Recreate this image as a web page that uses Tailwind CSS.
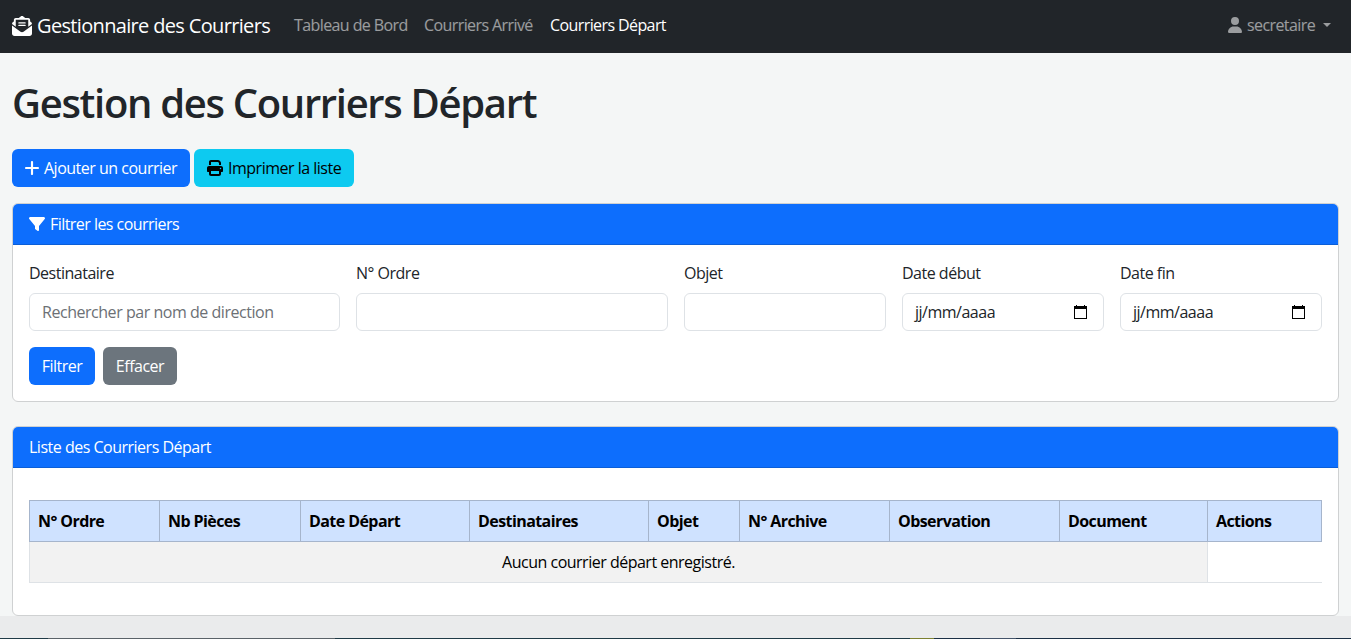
<!DOCTYPE html>
<html lang="fr">
<head>
  <meta charset="UTF-8" />
  <meta name="viewport" content="width=device-width, initial-scale=1.0" />
  <title>Gestionnaire des Courriers</title>
  <script src="https://cdn.jsdelivr.net/npm/@tailwindcss/browser@4"></script>
</head>
<body class="h-screen overflow-hidden flex flex-col bg-[#f4f6f6] font-['Open_Sans','Noto_Sans',sans-serif] text-base text-[#212529] tracking-[-0.031em]">

  <!-- Navbar -->
  <nav class="h-[53px] shrink-0 bg-[#212529] px-3 pb-0.5 flex items-center whitespace-nowrap tracking-[-0.037em]">
    <a href="#" class="flex items-center w-[282px] text-xl text-white tracking-[-0.033em]">
      <svg class="w-5 h-5 mr-[5px] shrink-0" viewBox="0 0 512 512" fill="currentColor"><path d="M215.400 96H144 107.800 96v8.800V144v40.400 89L.2 202.500c1.600-18.100 10.900-34.900 25.700-45.800L48 140.300V96c0-26.500 21.500-48 48-48h76.600l49.900-36.900C232.200 3.900 243.900 0 256 0s23.800 3.900 33.500 11L339.400 48H416c26.500 0 48 21.500 48 48v44.300l22.100 16.400c14.800 10.900 24.100 27.700 25.700 45.800L416 273.400v-89V144 104.800 96H404.200 368 296.600 215.400zM0 448V242.100L217.600 403.300c11.100 8.200 24.600 12.700 38.400 12.700s27.300-4.400 38.400-12.700L512 242.100V448c0 35.300-28.700 64-64 64H64c-35.300 0-64-28.700-64-64zM176 160H336c8.800 0 16 7.200 16 16s-7.200 16-16 16H176c-8.800 0-16-7.200-16-16s7.200-16 16-16zm0 64H336c8.800 0 16 7.200 16 16s-7.200 16-16 16H176c-8.800 0-16-7.200-16-16s7.200-16 16-16z"/></svg>
      <span>Gestionnaire des Courriers</span>
    </a>
    <div class="flex pb-0.5 text-white/55">
      <a href="#" class="w-[130px]">Tableau de Bord</a>
      <a href="#" class="w-[126px]">Courriers Arrivé</a>
      <a href="#" class="text-white">Courriers Départ</a>
    </div>
    <a href="#" class="ml-auto pb-0.5 flex items-center w-[112px] text-white/55">
      <svg class="w-4 h-4 mr-1 shrink-0" viewBox="-32 0 512 512" fill="currentColor"><path d="M224 256A128 128 0 1 0 224 0a128 128 0 1 0 0 256zm-45.700 48C79.800 304 0 383.800 0 482.300C0 498.700 13.300 512 29.700 512H418.300c16.400 0 29.700-13.300 29.700-29.700C448 383.800 368.200 304 269.700 304H178.300z"/></svg>
      <span>secretaire</span>
      <span class="ml-auto mr-2 border-x-[4.8px] border-t-[4.8px] border-x-transparent border-t-current"></span>
    </a>
  </nav>

  <main class="px-3 pt-[26px] flex-1">
    <h1 class="text-[40px] leading-[48px] font-semibold tracking-[-0.033em] mb-[22px]">Gestion des Courriers Départ</h1>

    <!-- Actions -->
    <div class="flex gap-1 mb-4 whitespace-nowrap">
      <a href="#" class="flex items-center w-[178px] h-[38px] px-[13px] rounded-md bg-[#0d6efd] text-white">
        <svg class="w-[14px] h-4 mr-[5px] shrink-0" viewBox="16 32 416 448" fill="currentColor"><path d="M256 80c0-17.700-14.300-32-32-32s-32 14.300-32 32V224H48c-17.700 0-32 14.300-32 32s14.300 32 32 32H192V432c0 17.700 14.300 32 32 32s32-14.300 32-32V288H400c17.700 0 32-14.300 32-32s-14.300-32-32-32H256V80z"/></svg>
        <span>Ajouter un courrier</span>
      </a>
      <a href="#" class="flex items-center w-[160px] h-[38px] px-[13px] rounded-md bg-[#0dcaf0] text-black">
        <svg class="w-4 h-4 mr-[5px] shrink-0" viewBox="0 0 512 512" fill="currentColor"><path d="M128 0C92.700 0 64 28.700 64 64v96h64V64H354.700L384 93.300V160h64V93.300c0-17-6.700-33.300-18.700-45.300L400 18.700C388 6.700 371.700 0 354.700 0H128zM384 352v32 64H128V384 368 352H384zm64 32h32c17.700 0 32-14.300 32-32V256c0-35.300-28.700-64-64-64H64c-35.300 0-64 28.700-64 64v96c0 17.700 14.300 32 32 32H64v64c0 35.300 28.700 64 64 64H384c35.300 0 64-28.700 64-64V384zM432 248a24 24 0 1 1 0 48 24 24 0 1 1 0-48z"/></svg>
        <span>Imprimer la liste</span>
      </a>
    </div>

    <!-- Filters -->
    <section class="h-[199px] mb-6 rounded-md border border-[#cfd1d2] bg-white overflow-hidden">
      <div class="h-[41px] px-4 flex items-center bg-[#0d6efd] border-b border-[#0b5ed7] text-white">
        <svg class="w-4 h-4 mr-[5px] shrink-0" viewBox="0 0 512 512" fill="currentColor"><path d="M3.900 54.900C10.500 40.900 24.500 32 40 32H472c15.500 0 29.500 8.900 36.100 22.900s4.600 30.500-5.200 42.500L320 320.900V448c0 12.100-6.800 23.200-17.700 28.600s-23.800 4.300-33.500-3l-64-48c-8.100-6-12.800-15.500-12.800-25.600V320.900L9 97.300C-.7 85.400-2.800 68.800 3.900 54.900z"/></svg>
        <span class="tracking-[-0.034em]">Filtrer les courriers</span>
      </div>
      <form class="px-4 pt-4">
        <div class="grid grid-cols-[311px_312px_202px_202px_202px] gap-x-4">
          <div>
            <label class="block mb-2">Destinataire</label>
            <input type="text" placeholder="Rechercher par nom de direction" class="block w-full h-[38px] px-3 rounded-md border border-[#dee2e6] tracking-[-0.029em] placeholder:text-[#6c7075]" />
          </div>
          <div>
            <label class="block mb-2">N° Ordre</label>
            <input type="text" class="block w-full h-[38px] px-3 rounded-md border border-[#dee2e6]" />
          </div>
          <div>
            <label class="block mb-2">Objet</label>
            <input type="text" class="block w-full h-[38px] px-3 rounded-md border border-[#dee2e6]" />
          </div>
          <div>
            <label class="block mb-2">Date début</label>
            <div class="flex items-center justify-between h-[38px] pl-3 pr-4 rounded-md border border-[#dee2e6]">
              <span>jj/mm/aaaa</span>
              <svg class="w-[13px] h-[14px] mb-px" viewBox="0 0 13 14" shape-rendering="crispEdges"><path d="M2 0h1v1h7V0h1v1h2v13H0V1h2zM1 4v9h11V4z" fill="#000" fill-rule="evenodd"/></svg>
            </div>
          </div>
          <div>
            <label class="block mb-2">Date fin</label>
            <div class="flex items-center justify-between h-[38px] pl-3 pr-4 rounded-md border border-[#dee2e6]">
              <span>jj/mm/aaaa</span>
              <svg class="w-[13px] h-[14px] mb-px" viewBox="0 0 13 14" shape-rendering="crispEdges"><path d="M2 0h1v1h7V0h1v1h2v13H0V1h2zM1 4v9h11V4z" fill="#000" fill-rule="evenodd"/></svg>
            </div>
          </div>
        </div>
        <div class="mt-4 flex gap-2 text-white">
          <button type="submit" class="w-[66px] h-[38px] rounded-md bg-[#0d6efd] tracking-[-0.031em]">Filtrer</button>
          <button type="reset" class="w-[74px] h-[38px] rounded-md bg-[#6c757d] tracking-[-0.031em]">Effacer</button>
        </div>
      </form>
    </section>

    <!-- List -->
    <section class="h-[190px] rounded-md border border-[#cfd1d2] bg-white overflow-hidden">
      <div class="h-[41px] px-4 flex items-center bg-[#0d6efd] border-b border-[#0b5ed7] text-white">Liste des Courriers Départ</div>
      <div class="px-4 pt-8">
        <table class="w-[1293px] table-fixed border-collapse text-left text-black">
          <colgroup>
            <col class="w-[130px]" /><col class="w-[141px]" /><col class="w-[169px]" /><col class="w-[179px]" /><col class="w-[91px]" /><col class="w-[150px]" /><col class="w-[170px]" /><col class="w-[148px]" /><col class="w-[114px]" />
          </colgroup>
          <thead>
            <tr class="h-[41px] bg-[#cfe2ff] tracking-[-0.036em]">
              <th class="px-2 border border-[#a6b5cc]">N° Ordre</th>
              <th class="px-2 border border-[#a6b5cc]">Nb Pièces</th>
              <th class="px-2 border border-[#a6b5cc]">Date Départ</th>
              <th class="px-2 border border-[#a6b5cc]">Destinataires</th>
              <th class="px-2 border border-[#a6b5cc]">Objet</th>
              <th class="px-2 border border-[#a6b5cc]">N° Archive</th>
              <th class="px-2 border border-[#a6b5cc]">Observation</th>
              <th class="px-2 border border-[#a6b5cc]">Document</th>
              <th class="px-2 border border-[#a6b5cc]">Actions</th>
            </tr>
          </thead>
          <tbody>
            <tr class="h-[41px] border-b border-[#dee2e6]">
              <td colspan="8" class="border border-[#dee2e6] bg-[#f2f2f2] text-center">Aucun courrier départ enregistré.</td>
            </tr>
          </tbody>
        </table>
      </div>
    </section>
  </main>

  <footer class="h-[23px] shrink-0 bg-[#eaebec] flex items-end">
    <div class="w-full h-px flex bg-[#1b2f45]">
      <span class="w-12 bg-[#1f3a46]"></span>
      <span class="w-[287px] bg-[#5a6268]"></span>
      <span class="w-[575px] bg-[#1f3a46]"></span>
      <span class="w-6 bg-[#7c8030]"></span>
      <span class="w-[46px]"></span>
      <span class="w-9 bg-[#44546a]"></span>
    </div>
  </footer>

</body>
</html>
